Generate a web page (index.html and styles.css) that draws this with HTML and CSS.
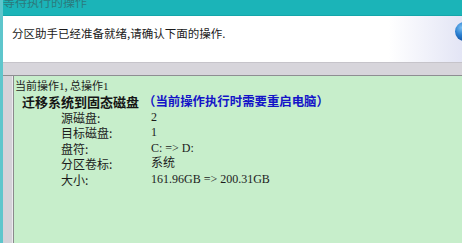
FILE: index.html
```
<!DOCTYPE html>
<html lang="zh-CN">
<head>
<meta charset="utf-8">
<link rel="stylesheet" href="styles.css">
</head>
<body>
<div class="window">
  <div class="titlebar"><span class="title">等待执行的操作</span></div>
  <div class="header">
    <span class="intro">分区助手已经准备就绪,请确认下面的操作.</span>
    <span class="sphere"></span>
  </div>
  <div class="band"></div>
  <div class="body">
    <div class="gutter"></div>
    <div class="panel">
      <div class="summary">当前操作<span class="num">1</span>,&nbsp;总操作<span class="num">1</span></div>
      <div class="op"><span class="op-name">迁移系统到固态磁盘</span><span class="op-note">（当前操作执行时需要重启电脑）</span></div>
      <div class="details">
        <span class="label">源磁盘:</span><span class="value">2</span>
        <span class="label">目标磁盘:</span><span class="value">1</span>
        <span class="label">盘符:</span><span class="value">C: =&gt; D:</span>
        <span class="label">分区卷标:</span><span class="value">系统</span>
        <span class="label">大小:</span><span class="value">161.96GB =&gt; 200.31GB</span>
      </div>
    </div>
  </div>
</div>
</body>
</html>
```
FILE: styles.css
```
html, body {
  margin: 0;
  padding: 0;
}
body {
  width: 462px;
  height: 243px;
  overflow: hidden;
  font-family: "Liberation Serif", "Noto Sans CJK SC", serif;
  color: #1c1c1c;
}
.window {
  display: flex;
  flex-direction: column;
  height: 243px;
  border-left: 3px solid #5ec6cc;
  box-sizing: border-box;
  overflow: hidden;
}
.titlebar {
  height: 16px;
  flex: none;
  background: #1bb4b8;
  overflow: hidden;
  border-bottom: 1px solid #14a6aa;
  box-sizing: border-box;
}
.title {
  display: block;
  margin-top: -4px;
  font-family: "Noto Sans CJK SC", sans-serif;
  font-size: 12px;
  line-height: 12px;
  color: #2c7a7c;
}
.header {
  height: 46px;
  flex: none;
  display: flex;
  align-items: center;
  justify-content: space-between;
  padding-left: 9px;
  background: linear-gradient(to right, #ffffff 0%, #ffffff 84%, #e3e5f5 100%);
}
.intro {
  font-family: "Noto Sans CJK SC", sans-serif;
  font-size: 11.5px;
  color: #1a1a1a;
  margin-top: -13px;
}
.sphere {
  width: 19px;
  height: 19px;
  flex: none;
  border-radius: 50%;
  margin-right: -12px;
  margin-top: -16px;
  background: radial-gradient(circle at 35% 30%, #7cc0f2 0%, #2a7fd0 40%, #134f9e 80%, #0c3a7a 100%);
}
.band {
  height: 14px;
  flex: none;
  background: #d7d5db;
  border-top: 1px solid #c6c4ca;
  border-bottom: 1px solid #8e8e92;
  box-sizing: border-box;
}
.body {
  flex: 1;
  display: flex;
}
.gutter {
  width: 9px;
  flex: none;
  background: #d5d3d9;
  border-right: 1px solid #ecebef;
}
.panel {
  flex: 1;
  background: #c7eecb;
  border-left: 1px solid #8a8a8c;
  padding: 2px 0 0 1px;
}
.summary {
  font-family: "Noto Sans CJK SC", sans-serif;
  font-size: 11px;
  line-height: 15px;
}
.num {
  font-family: "Liberation Serif", serif;
  font-size: 11px;
}
.op {
  display: flex;
  gap: 4px;
  padding-left: 7px;
  line-height: 15.6px;
  font-family: "Noto Sans CJK SC", sans-serif;
  font-weight: bold;
}
.op-name {
  font-size: 13px;
  color: #151515;
}
.op-note {
  font-size: 12.4px;
  color: #1414c8;
}
.details {
  display: grid;
  grid-template-columns: 90px auto;
  padding-left: 46px;
  line-height: 15.6px;
  font-size: 12px;
}
.label {
  font-family: "Noto Sans CJK SC", sans-serif;
  font-size: 12px;
}
.value {
  font-family: "Liberation Serif", "Noto Sans CJK SC", serif;
  font-size: 12px;
}
```
